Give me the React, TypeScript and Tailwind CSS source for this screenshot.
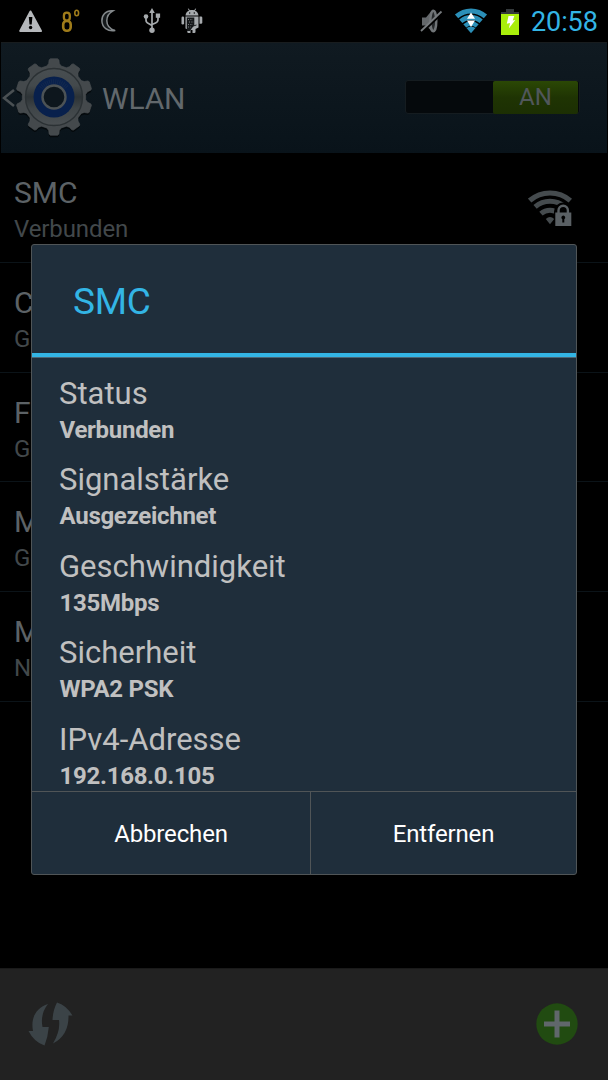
const networks = [
  { name: "SMC", state: "Verbunden", secured: true },
  { name: "C", state: "Ge" },
  { name: "F", state: "Ge" },
  { name: "M", state: "Ge" },
  { name: "M", state: "N" },
];

const details = [
  { label: "Status", value: "Verbunden" },
  { label: "Signalstärke", value: "Ausgezeichnet" },
  { label: "Geschwindigkeit", value: "135Mbps" },
  { label: "Sicherheit", value: "WPA2 PSK" },
  { label: "IPv4-Adresse", value: "192.168.0.105" },
];

// ten teeth around a circle, one every 36 degrees
const gearPath = () => {
  const points: string[] = [];
  const at = (deg: number, r: number) => {
    const a = ((deg - 90) * Math.PI) / 180;
    return `${(39 + r * Math.cos(a)).toFixed(2)} ${(39 + r * Math.sin(a)).toFixed(2)}`;
  };
  for (let i = 0; i < 10; i++) {
    const c = i * 36;
    points.push(at(c - 13, 31.8), at(c - 9, 34), at(c - 7.5, 37.4), at(c - 5.5, 38.4));
    points.push(at(c + 5.5, 38.4), at(c + 7.5, 37.4), at(c + 9, 34), at(c + 13, 31.8));
  }
  return `M${points.join("L")}Z`;
};

// arc of a wifi fan that opens 41 degrees to each side of its tip
const fanArc = (cx: number, cy: number, r: number) => {
  const dx = r * 0.656;
  const dy = r * 0.755;
  return `M${cx - dx} ${cy - dy}A${r} ${r} 0 0 1 ${cx + dx} ${cy - dy}`;
};

const GearIcon = () => (
  <svg width="78" height="82" viewBox="0 0 78 82">
    <defs>
      <linearGradient id="metal" x1="0" y1="0" x2="0" y2="1">
        <stop offset="0" stopColor="#484e51" />
        <stop offset="0.3" stopColor="#43494c" />
        <stop offset="0.5" stopColor="#2d3336" />
        <stop offset="0.7" stopColor="#3f4548" />
        <stop offset="1" stopColor="#4a4f52" />
      </linearGradient>
    </defs>
    <path d={gearPath()} fill="#04090c" transform="translate(0 2)" />
    <path d={gearPath()} fill="#44494c" stroke="#4b5154" strokeWidth="0.6" />
    <circle cx="39" cy="39" r="28.5" fill="url(#metal)" stroke="#2b3134" strokeWidth="1.4" />
    <circle cx="39" cy="39" r="20.5" fill="#08204c" />
    <path d="M26 30a16.500 16.500 0 0 1 26 0" fill="none" stroke="#12284e" strokeWidth="5" strokeDasharray="1 1" />
    <circle cx="39" cy="39" r="11.5" fill="#0d161d" stroke="#4c5255" strokeWidth="2.4" />
  </svg>
);

const AndroidIcon = () => (
  <svg width="22" height="26" viewBox="0 0 22 26">
    <g fill="#a6aaad">
      <path d="M4.5 7.5C4.7 4.8 6.4 3.3 8 2.7L6.8 0.8L7.5 0.4L8.9 2.3C10.2 1.9 11.8 1.9 13.1 2.3L14.5 0.4L15.2 0.8L14 2.7C15.6 3.3 17.2 4.8 17.5 7.5Z" />
      <rect x="0.5" y="8.5" width="2.6" height="8" rx="1.2" />
      <path d="M18.5 8.5h1.5q1.3 0 1.3 1.3v4.5q0 1.500-1.3 1.500h-1.5z" />
      <path d="M4.5 8.5H17.5V19.500L14.500 21V24Q14.500 25 13.300 25H11.500V22H9.500V25H7.300Q6.300 25 6.300 24V21H5.500Q4.500 21 4.500 20Z" />
    </g>
    <circle cx="8.7" cy="5" r="0.7" />
    <circle cx="13.3" cy="5" r="0.7" />
    <path d="M5.8 9.5h7.500v7.500l-4.500 6h-3z" fill="#15181a" />
    <path d="M7 11.5h5M8 14h5M7 16.5h5M7 19h3" stroke="#83888b" strokeWidth="0.9" strokeDasharray="1 1.4" />
    <path d="M10.5 18.5l5-1.5" stroke="#15181a" strokeWidth="0.9" />
  </svg>
);

const StatusBar = () => (
  <div className="h-[42px] flex items-center justify-between pl-[19px] pr-[10px]">
    <div className="flex items-center">
      <svg width="24" height="23" viewBox="0 0 24 23">
        <path d="M11.500 1.500L22 21H1.200Z" fill="#b5b8bb" stroke="#b5b8bb" strokeWidth="2" strokeLinejoin="round" />
        <path d="M9.800 7h3.600l-0.700 7.500h-2.200z" />
        <circle cx="11.6" cy="17.5" r="1.7" />
      </svg>
      <svg className="ml-[18px]" width="20" height="24" viewBox="0 0 20 24">
        <g fill="none" stroke="#a07c1a">
          <rect x="2.9" y="3.7" width="5.9" height="8" rx="2.9" strokeWidth="2.3" />
          <rect x="2.2" y="12" width="7.5" height="9.8" rx="3.5" strokeWidth="2.6" />
          <ellipse cx="15.7" cy="4" rx="1.9" ry="2.7" strokeWidth="1.6" />
        </g>
      </svg>
      <svg className="ml-[19px]" width="18" height="24" viewBox="0 0 18 24">
        <path d="M13 1.800C5.500 1 1.700 6.500 1.900 12c.2 6.200 5.600 11 13.300 9.600C9.800 20 6.800 16.500 6.800 11.800c0-4.300 2.200-8 6.200-10z" fill="#15191b" stroke="#84898c" strokeWidth="1.5" />
      </svg>
      <svg className="ml-[25px]" width="18" height="26" viewBox="0 0 18 26">
        <g fill="none" stroke="#a6aaad" strokeWidth="1.7">
          <path d="M9 4v18M3 9v3q0 2.500 2.500 3.500l3.500 2M15 8v3.500q0 2.500-2.500 3.500L9 16.500" />
        </g>
        <g fill="#a6aaad">
          <path d="M9 0l2.800 5H6.200z" />
          <circle cx="3" cy="8.500" r="2.300" />
          <rect x="12.800" y="5.500" width="4.300" height="4.300" />
          <circle cx="9" cy="22.300" r="2.700" />
        </g>
      </svg>
      <div className="ml-[20px]">
        <AndroidIcon />
      </div>
    </div>
    <div className="flex items-center">
      <svg width="24" height="24" viewBox="0 0 24 24">
        <path d="M2 8.500h4l5-6v19l-5-5H2z" fill="#63676a" />
        <ellipse cx="13.300" cy="12" rx="3" ry="10.200" fill="#25282a" stroke="#707477" strokeWidth="2.400" />
        <path d="M2.500 23L22.500 4" stroke="#000" strokeWidth="2" />
        <path d="M1 22L21.500 2.500" stroke="#777b7e" strokeWidth="1.800" />
      </svg>
      <svg className="ml-[10px]" width="34" height="26" viewBox="0 0 34 26">
        <g fill="none" stroke="#2b8fb8">
          <path d={fanArc(17, 25, 22)} strokeWidth="5" />
          <path d={fanArc(17, 25, 15.5)} strokeWidth="4.8" />
          <path d={fanArc(17, 25, 9.5)} strokeWidth="4.4" />
        </g>
        <path d="M12.500 20Q17 17 21.500 20L17 25.300z" fill="#2b8fb8" />
        <path d="M17 4.500l4 6.300h-8zM17 19l4-6.500h-8z" fill="#fff" />
      </svg>
      <svg className="ml-[13px]" width="18" height="27" viewBox="0 0 18 27">
        <path d="M5 1h8v3h5v3H0V4h5z" fill="#34393b" />
        <rect y="6" width="18" height="21" fill="#a9ee0b" />
        <path d="M7.500 8h5.800l-1.600 4.500 2.600-.4-6.500 8.500 1.300-5.500-3.300.6z" fill="#fff" />
      </svg>
      <span className="ml-[12px] w-[67px] pt-[2px] text-[27px] leading-10 text-[#33b5e5] tracking-[-0.1px] whitespace-nowrap">20:58</span>
    </div>
  </div>
);

const Header = () => (
  <div className="h-[111px] mx-px flex items-center bg-linear-to-b from-[#101a21] to-[#09131a] border-t border-[#181c1e]">
    <svg className="ml-[1px] shrink-0" width="14" height="20" viewBox="0 0 14 20">
      <path d="M12 2L2 10l10 8" fill="none" stroke="#4a5053" strokeWidth="2.6" />
    </svg>
    <div className="-ml-px mt-[2px]">
      <GearIcon />
    </div>
    <span className="ml-[9px] pt-[2px] text-[30px] leading-9 tracking-[-0.2px] text-[#62686c]">WLAN</span>
    <div className="ml-auto mr-[27px] mb-[2px] h-[34px] w-[175px] flex justify-end rounded-[3px] border border-[#151c20] bg-[#05090c]">
      <div className="w-[85px] h-[33px] mr-[1px] rounded-[2px] bg-linear-to-b from-[#2b4805] via-[#1f3403] to-[#1c2f03] text-center text-2xl leading-[33px] text-[#51575b]">
        AN
      </div>
    </div>
  </div>
);

const SecuredWifi = () => (
  <svg className="mt-[37px] mr-[35px]" width="45" height="38" viewBox="0 0 45 38">
    <g fill="none" stroke="#454b4e">
      <path d={fanArc(22, 34, 31)} strokeWidth="5.2" />
      <path d={fanArc(22, 34, 22.7)} strokeWidth="5" />
      <path d={fanArc(22, 34, 13.8)} strokeWidth="5" />
    </g>
    <path d="M17.800 29q4.200-4 8.400 0l-4.200 5.300z" fill="#454b4e" />
    <path d="M26 22.500v-1a9 9 0 0 1 18 0v1h1v14H26.500z" />
    <path d="M30.500 23v-2.500a4.700 4.700 0 0 1 9.400 0V23" fill="none" stroke="#5a6064" strokeWidth="2.4" />
    <rect x="27.300" y="22.500" width="16" height="13.500" fill="#5a6064" />
    <path d="M35.300 25.500a2 2 0 0 1 1 3.700v3.300h-2v-3.300a2 2 0 0 1 1-3.700z" />
  </svg>
);

const NetworkList = () => (
  <div className="flex flex-col">
    {networks.map((network, i) => (
      <div key={i} className="h-[109.75px] flex justify-between border-b border-[#0b1318] pl-[14px] pt-[22px]">
        <div className="whitespace-nowrap">
          <div className="text-[30px] leading-9 text-[#5c6266]">{network.name}</div>
          <div className="pt-px text-2xl leading-[35px] tracking-[-0.1px] text-[#42484b]">{network.state}</div>
        </div>
        {network.secured && (
          <div className="-mt-[22px]">
            <SecuredWifi />
          </div>
        )}
      </div>
    ))}
  </div>
);

const BottomBar = () => (
  <div className="h-[112px] mt-auto flex items-center justify-between border-t border-[#1a1a1a] bg-[#222222] pl-[28px] pr-[30px] pb-[2px]">
    <svg width="46" height="46" viewBox="0 0 46 46" fill="#3b4347">
      <path d="M20 3C8 7 2.500 17 5 30H0.500Q6 41 16.500 44.500Q20 36 20.800 26H14.500Q12 13 20 3z" />
      <path d="M29 1.500Q38 4 44.500 14.500H40.500Q41 34 25 42.500Q32.500 30 31 19H24.500Q25 9 29 1.500z" />
    </svg>
    <svg width="42" height="42" viewBox="0 0 42 42">
      <circle cx="21" cy="21" r="20.7" fill="#214b11" />
      <path d="M21 7.500v27M8 21h26" stroke="#60676b" strokeWidth="5" />
    </svg>
  </div>
);

const Dialog = () => (
  <div className="absolute left-[31px] top-[243.5px] w-[546px] h-[631.5px] flex flex-col rounded-[3px] border border-[#505557] bg-[#1f2e3b]">
    <div className="h-[108.5px] shrink-0 pl-[41px] pt-[4px] text-[37px] leading-[105px] tracking-[-0.2px] text-[#33b5e5]">SMC</div>
    <div className="h-[5px] shrink-0 border-b border-[#4d6674] bg-[#33b5e5]" />
    <div className="h-[433px] shrink-0 overflow-hidden pl-[27px] pt-[17.5px] text-[#c0c0c0]">
      {details.map((item) => (
        <div key={item.label} className="h-[86.6px]">
          <div className="text-[31px] leading-9">{item.label}</div>
          <div className="pl-[0.5px] text-2xl leading-9 font-bold tracking-[-0.28px]">{item.value}</div>
        </div>
      ))}
    </div>
    <div className="grow flex border-t border-[#505557] text-2xl tracking-[-0.15px] text-white">
      <button className="w-[279px] pt-[2px] border-r border-[#505557]">Abbrechen</button>
      <button className="grow pt-[2px]">Entfernen</button>
    </div>
  </div>
);

const App = () => {
  return (
    <div className="relative w-[608px] h-[1080px] flex flex-col overflow-hidden bg-black font-[Roboto,sans-serif]">
      <StatusBar />
      <Header />
      <NetworkList />
      <BottomBar />
      <Dialog />
    </div>
  );
};

export default App;
